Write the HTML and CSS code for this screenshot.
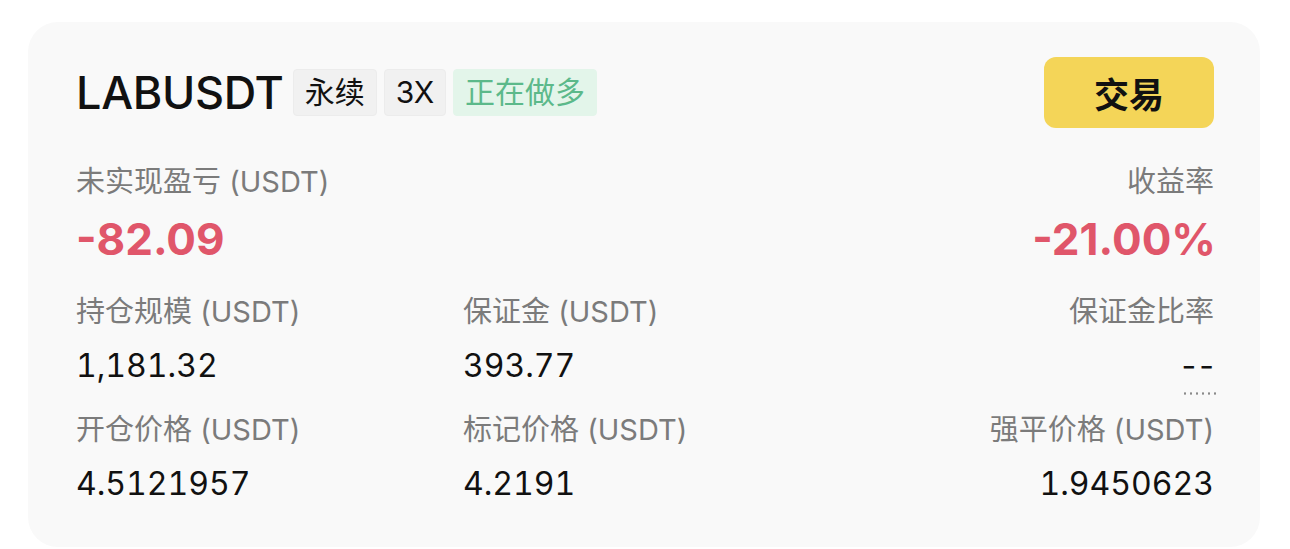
FILE: index.html
```html
<!DOCTYPE html>
<html lang="zh-CN">
<head>
    <meta charset="UTF-8">
    <meta name="viewport" content="width=device-width, initial-scale=1.0">
    <title>LABUSDT 持仓</title>
    <link rel="stylesheet" href="styles.css">
</head>
<body>
    <div class="card">
        <div class="head">
            <div class="symbol">
                <span class="name">LABUSDT</span>
                <span class="tag">永续</span>
                <span class="tag">3X</span>
                <span class="tag long">正在做多</span>
            </div>
            <button class="trade">交易</button>
        </div>

        <div class="pnl">
            <div class="stat">
                <div class="label">未实现盈亏 (USDT)</div>
                <div class="big loss">-82.09</div>
            </div>
            <div class="stat right">
                <div class="label">收益率</div>
                <div class="big loss">-21.00%</div>
            </div>
        </div>

        <div class="grid">
            <div class="stat">
                <div class="label">持仓规模 (USDT)</div>
                <div class="value">1,181.32</div>
            </div>
            <div class="stat">
                <div class="label">保证金 (USDT)</div>
                <div class="value">393.77</div>
            </div>
            <div class="stat right">
                <div class="label">保证金比率</div>
                <div class="value"><span class="dotted">--</span></div>
            </div>
            <div class="stat">
                <div class="label">开仓价格 (USDT)</div>
                <div class="value">4.5121957</div>
            </div>
            <div class="stat">
                <div class="label">标记价格 (USDT)</div>
                <div class="value">4.2191</div>
            </div>
            <div class="stat right">
                <div class="label">强平价格 (USDT)</div>
                <div class="value">1.9450623</div>
            </div>
        </div>
    </div>
</body>
</html>
```

FILE: styles.css
```css
body {
    margin: 0;
    background-color: #ffffff;
    font-family: Inter, "Noto Sans CJK SC", sans-serif;
    color: #111111;
}

.card {
    margin: 22px 30px 0 28px;
    height: 525px;
    box-sizing: border-box;
    padding: 35px 46px 0 48px;
    background-color: #f9f9f9;
    border-radius: 30px;
}

.head {
    display: flex;
    justify-content: space-between;
    align-items: center;
}

.symbol {
    display: flex;
    align-items: center;
    gap: 7px;
}

.name {
    font-size: 45px;
    font-weight: 500;
    letter-spacing: -0.3px;
    margin-right: 2px;
}

.tag {
    display: inline-block;
    height: 47px;
    line-height: 45px;
    padding: 0 11px;
    font-size: 30px;
    background-color: #f1f1f1;
    border: 1px solid #ececec;
    border-radius: 4px;
    box-sizing: border-box;
}

.tag.long {
    color: #5cb98a;
    background-color: #e3f5ea;
    border-color: #e3f5ea;
}

.trade {
    width: 170px;
    height: 71px;
    border: none;
    border-radius: 12px;
    background-color: #f4d558;
    font-family: "Noto Sans CJK SC", sans-serif;
    font-size: 35px;
    font-weight: 700;
    color: #111111;
    cursor: pointer;
}

.pnl {
    display: flex;
    justify-content: space-between;
    margin-top: 36px;
}

.grid {
    display: grid;
    grid-template-columns: 387px 1fr auto;
    row-gap: 26px;
    margin-top: 30px;
}

.stat.right {
    text-align: right;
}

.label {
    font-size: 29px;
    line-height: 36px;
    color: #7b7b7b;
}

.big {
    margin-top: 14px;
    font-size: 44px;
    line-height: 50px;
    font-weight: 700;
}

.stat.right .big {
    margin-right: -2px;
}

.loss {
    color: #e0566a;
}

.value {
    margin-top: 16px;
    font-size: 32px;
    line-height: 40px;
    font-variant-numeric: tabular-nums;
}

/* margin ratio placeholder with dotted hint line */
.dotted {
    display: inline-block;
    line-height: 40px;
    font-variant-numeric: normal;
    letter-spacing: 3px;
    margin-right: -3px;
    padding-bottom: 9px;
    margin-bottom: -9px;
    background-image: radial-gradient(circle, #8a8a8a 1px, transparent 1.3px);
    background-size: 6px 3px;
    background-repeat: repeat-x;
    background-position: left bottom;
}
```
